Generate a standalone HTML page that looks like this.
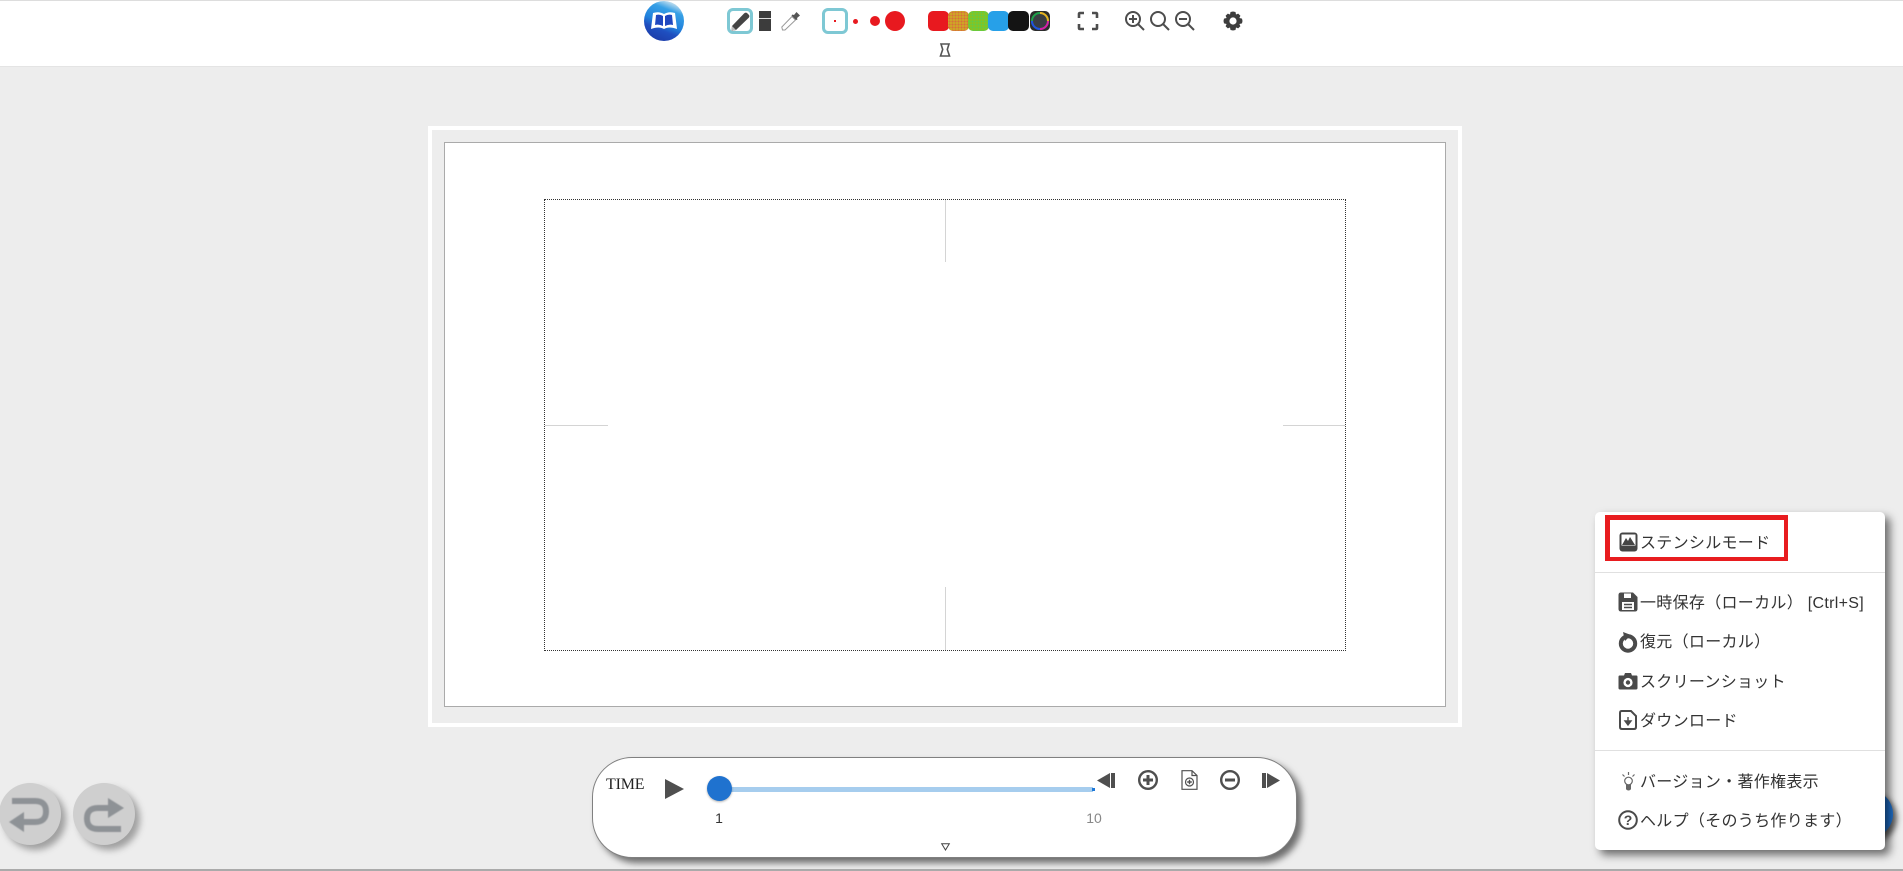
<!DOCTYPE html>
<html lang="ja">
<head>
<meta charset="utf-8">
<title>Paint</title>
<style>
html,body{margin:0;padding:0;width:1903px;height:871px;overflow:hidden;background:#ededed;font-family:"Liberation Sans","Noto Sans CJK JP",sans-serif;color:#333}
.a{position:absolute;box-sizing:border-box}
svg{position:absolute;display:block;overflow:visible}
#top{left:0;top:0;width:1903px;height:67px;background:#fff;border-top:1px solid #ddd;border-bottom:1px solid #e4e4e4}
.sw{top:11px;width:21px;height:20px;border-radius:5px}
.m{left:1640px;font-size:16px;line-height:22px;white-space:nowrap;color:#333;letter-spacing:.3px}
.hl{left:1595px;width:290px;height:1px;background:#e0e0e0}
</style>
</head>
<body>
<div class="a" id="top"></div>

<!-- logo -->
<svg style="left:644px;top:1px" width="40" height="40" viewBox="0 0 40 40">
<defs>
<linearGradient id="lg" x1="0.7" y1="0" x2="0.3" y2="1"><stop offset="0" stop-color="#d8e8f0"/><stop offset=".22" stop-color="#36a0e6"/><stop offset=".55" stop-color="#2080dc"/><stop offset=".72" stop-color="#1f4fc0"/><stop offset="1" stop-color="#1c3ca8"/></linearGradient>
</defs>
<circle cx="20" cy="20" r="20" fill="url(#lg)"/>
<path d="M7 28 L9 12 Q15 10 20 13 Q25 10 31 12 L33 28 Q25 25 20 28 Q15 25 7 28Z" fill="#fff"/>
<path d="M11 24 L12 14 Q16 13 19 15 L19 25 Q15 23 11 24Z M29 24 L28 14 Q24 13 21 15 L21 25 Q25 23 29 24Z" fill="#2048c0"/>
</svg>

<!-- pen -->
<div class="a" style="left:727px;top:8px;width:26px;height:26px;border:3px solid #7ec8d4;border-radius:6px"></div>
<svg style="left:727px;top:8px" width="26" height="26" viewBox="0 0 26 26">
<path d="M5 18 L17 5.5 Q18.5 4 20 5 L22 7 Q23 8.5 21.5 10 L9 22 L4.5 23Z" fill="#444"/><path d="M5 18 L9 22 L4.5 23Z" fill="#bbb"/>
</svg>
<!-- eraser -->
<div class="a" style="left:759px;top:11px;width:12px;height:20px;background:#3c3c3c"></div>
<div class="a" style="left:759px;top:18px;width:12px;height:1px;background:#ddd"></div>
<!-- dropper -->
<svg style="left:781px;top:11px" width="20" height="20" viewBox="0 0 20 20">
<path d="M1.5 19 L.8 16 L11 5.5 L14.5 9 L4 19Z" fill="#fff" stroke="#999" stroke-width="1"/>
<path d="M13 4 L15.5 1 L19 4.5 L16 7 L16.5 8.5 L15 9 L10.5 4.5 L11.5 3.5Z" fill="#555"/>
</svg>
<!-- sizes -->
<div class="a" style="left:822px;top:8px;width:26px;height:26px;border:3px solid #7ec8d4;border-radius:6px"></div>
<div class="a" style="left:834px;top:20px;width:2px;height:2px;background:#e8191f"></div>
<div class="a" style="left:853px;top:19px;width:5px;height:5px;border-radius:50%;background:#e8191f"></div>
<div class="a" style="left:870px;top:16px;width:10px;height:10px;border-radius:50%;background:#e8191f"></div>
<div class="a" style="left:885px;top:11px;width:20px;height:20px;border-radius:50%;background:#e8191f"></div>

<!-- colours -->
<div class="a sw" style="left:928px;background:#e8191f"></div>
<div class="a sw" style="left:948px;background:#cfa426;background-image:radial-gradient(#d8703a .8px,transparent 1px);background-size:3px 3px"></div>
<div class="a sw" style="left:968px;background:#84c424;background-image:radial-gradient(#5fcc48 .8px,transparent 1px);background-size:3px 3px"></div>
<div class="a sw" style="left:988px;background:#27a0e8"></div>
<div class="a sw" style="left:1008px;background:#141414"></div>
<svg style="left:1030px;top:11px" width="20" height="20" viewBox="0 0 20 20">
<rect width="20" height="20" rx="5" fill="#2c2c2c"/>
<circle cx="10" cy="10" r="8" fill="#3a3d42" stroke="#1ea04a" stroke-width="2"/>
<path d="M10 2 A8 8 0 0 1 18 10" fill="none" stroke="#e8b020" stroke-width="2"/>
<path d="M18 10 A8 8 0 0 1 10 18" fill="none" stroke="#d81ca8" stroke-width="2"/>
<path d="M10 18 A8 8 0 0 1 2 10" fill="none" stroke="#2050e0" stroke-width="2"/>
</svg>

<!-- fullscreen -->
<svg style="left:1078px;top:12px" width="20" height="18" viewBox="0 0 20 18" fill="none" stroke="#4d4d4d" stroke-width="2.6">
<path d="M1 6 V2 Q1 1 2 1 H6 M14 1 H18 Q19 1 19 2 V6 M19 12 V16 Q19 17 18 17 H14 M6 17 H2 Q1 17 1 16 V12"/>
</svg>
<!-- zoom icons -->
<svg style="left:1125px;top:11px" width="20" height="20" viewBox="0 0 20 20" fill="none" stroke="#4d4d4d" stroke-width="2">
<circle cx="8" cy="8" r="7"/><path d="M13 13 L19 19M4 8H12M8 4V12"/>
</svg>
<svg style="left:1150px;top:11px" width="20" height="20" viewBox="0 0 20 20" fill="none" stroke="#4d4d4d" stroke-width="2">
<circle cx="8" cy="8" r="7"/><path d="M13 13 L19 19"/>
</svg>
<svg style="left:1175px;top:11px" width="20" height="20" viewBox="0 0 20 20" fill="none" stroke="#4d4d4d" stroke-width="2">
<circle cx="8" cy="8" r="7"/><path d="M13 13 L19 19M4 8H12"/>
</svg>
<!-- gear -->
<svg style="left:1223px;top:11px" width="20" height="20" viewBox="0 0 20 20">
<path d="M10 0.5 L12.5 1 L13 3.5 L15.2 2.6 L17.4 4.8 L16.4 7 L19 7.6 L19.5 10 L19 12.4 L16.4 13 L17.4 15.2 L15.2 17.4 L13 16.5 L12.5 19 L10 19.5 L7.5 19 L7 16.5 L4.8 17.4 L2.6 15.2 L3.6 13 L1 12.4 L0.5 10 L1 7.6 L3.6 7 L2.6 4.8 L4.8 2.6 L7 3.5 L7.5 1Z" fill="#3d3d3d"/>
<circle cx="10" cy="10" r="3.6" fill="#fff"/>
</svg>
<!-- flask -->
<svg style="left:939px;top:43px" width="12" height="14" viewBox="0 0 12 14" fill="none" stroke="#555" stroke-width="1.6">
<path d="M2 1 H10 L8.3 6.5 L10.5 13 H1.5 L3.7 6.5Z"/>
</svg>

<!-- canvas -->
<div class="a" style="left:428px;top:126px;width:1034px;height:601px;border:4px solid #fff;background:#ededed"></div>
<div class="a" style="left:444px;top:142px;width:1002px;height:565px;background:#fff;border:1px solid #aaa"></div>
<div class="a" style="left:544px;top:199px;width:802px;height:452px;border:1px dotted #333"></div>
<div class="a" style="left:945px;top:200px;width:1px;height:62px;background:#d4d4d4"></div>
<div class="a" style="left:945px;top:587px;width:1px;height:63px;background:#d4d4d4"></div>
<div class="a" style="left:545px;top:425px;width:63px;height:1px;background:#d4d4d4"></div>
<div class="a" style="left:1283px;top:425px;width:62px;height:1px;background:#d4d4d4"></div>

<!-- timeline -->
<div class="a" style="left:592px;top:757px;width:705px;height:101px;background:#fff;border:1px solid #808080;border-radius:40px;box-shadow:5px 5px 7px #6e6e6e"></div>
<div class="a" style="left:606px;top:775px;font:16px/20px 'Liberation Serif',serif;letter-spacing:-.2px;color:#222">TIME</div>
<svg style="left:665px;top:779px" width="19" height="20" viewBox="0 0 19 20"><path d="M0 0 L19 10 L0 20Z" fill="#4f4f4f"/></svg>
<div class="a" style="left:719px;top:787px;width:374px;height:5px;background:#a6cdee"></div>
<div class="a" style="left:1092px;top:788px;width:3px;height:3px;background:#1e78d8"></div>
<div class="a" style="left:707px;top:776px;width:25px;height:25px;border-radius:50%;background:#1f72cf;box-shadow:0 1px 2px rgba(0,0,0,.3)"></div>
<div class="a" style="left:709px;top:810px;width:20px;text-align:center;font-size:14px;line-height:16px;color:#333">1</div>
<div class="a" style="left:1079px;top:810px;width:30px;text-align:center;font-size:14px;line-height:16px;color:#888">10</div>

<svg style="left:1097px;top:772px" width="18" height="17" viewBox="0 0 18 17"><path d="M13 1 V16 L0 8.5Z" fill="#4f4f4f"/><rect x="14" y="1" width="4" height="15" fill="#4f4f4f"/></svg>
<svg style="left:1138px;top:770px" width="20" height="20" viewBox="0 0 20 20"><circle cx="10" cy="10" r="8.8" fill="none" stroke="#4f4f4f" stroke-width="2.4"/><path d="M5 10H15M10 5V15" stroke="#4f4f4f" stroke-width="3"/></svg>
<svg style="left:1181px;top:770px" width="17" height="20" viewBox="0 0 17 20" fill="none" stroke="#4f4f4f"><path d="M1 .7 H11 L16 5.5 V19.3 H1Z M11 .7 V5.5 H16" stroke-width="1.2"/><circle cx="8.5" cy="12" r="4" stroke-width="1.2"/><path d="M6.2 12H10.8M8.5 9.7V14.3" stroke-width="1.4"/></svg>
<svg style="left:1220px;top:770px" width="20" height="20" viewBox="0 0 20 20"><circle cx="10" cy="10" r="8.8" fill="none" stroke="#4f4f4f" stroke-width="2.4"/><path d="M5 10H15" stroke="#4f4f4f" stroke-width="3"/></svg>
<svg style="left:1262px;top:772px" width="18" height="17" viewBox="0 0 18 17"><rect x="0" y="1" width="4" height="15" fill="#4f4f4f"/><path d="M5 1 V16 L18 8.5Z" fill="#4f4f4f"/></svg>
<svg style="left:941px;top:843px" width="9" height="8" viewBox="0 0 9 8"><path d="M.7 .7 H8.3 L4.5 7Z" fill="#fff" stroke="#444"/></svg>

<!-- undo / redo -->
<div class="a" style="left:-1px;top:783px;width:62px;height:62px;border-radius:50%;background:#cfcfcf;box-shadow:5px 5px 7px #a0a0a0"></div>
<svg style="left:8px;top:796px;filter:blur(.5px)" width="42" height="36" viewBox="0 0 42 36"><path d="M4 5 H27 Q38 5 38 15.5 Q38 26 27 26 H14" fill="none" stroke="#8e9296" stroke-width="6"/><path d="M1 26 L16 16 V36Z" fill="#8e9296"/></svg>
<div class="a" style="left:73px;top:783px;width:62px;height:62px;border-radius:50%;background:#cfcfcf;box-shadow:5px 5px 7px #a0a0a0"></div>
<svg style="left:84px;top:796px;filter:blur(.5px)" width="42" height="36" viewBox="0 0 42 36"><path d="M37 33 H14 Q3 33 3 22.5 Q3 12 14 12 H26" fill="none" stroke="#8e9296" stroke-width="6"/><path d="M40 12 L24 2 V22Z" fill="#8e9296"/></svg>

<!-- bottom line -->
<div class="a" style="left:0;top:869px;width:1903px;height:2px;background:#aaa"></div>

<!-- blue button behind menu -->
<div class="a" style="left:1845px;top:790px;width:48px;height:48px;border-radius:50%;background:#1f72cf;box-shadow:4px 4px 6px #666"></div>

<!-- menu -->
<div class="a" style="left:1595px;top:512px;width:290px;height:338px;background:#fff;border-radius:5px;box-shadow:5px 5px 9px rgba(0,0,0,.55)"></div>
<div class="a" style="left:1605px;top:515px;width:183px;height:46px;border:5px solid #e81c1f;border-bottom-width:4px;border-right-width:4px"></div>
<div class="a hl" style="top:572px"></div>
<div class="a hl" style="top:750px"></div>

<svg style="left:1619px;top:532px" width="19" height="20" viewBox="0 0 19 20"><rect x=".5" y=".5" width="18" height="19" rx="3" fill="#444"/><rect x="2.5" y="2.5" width="14" height="11" fill="#fff"/><path d="M3 13 L7 6 L9 9 L11 5 L16 13Z" fill="#444"/></svg>
<div class="a m" style="top:533px">ステンシルモード</div>

<svg style="left:1618px;top:592px" width="20" height="20" viewBox="0 0 20 20"><path d="M3 .5 H15 L19.5 5 V17 Q19.5 19.5 17 19.5 H3 Q.5 19.5 .5 17 V3 Q.5 .5 3 .5Z" fill="#4a4a4a"/><rect x="6" y="1.5" width="7" height="4.5" fill="#fff"/><rect x="4" y="10" width="12" height="8" fill="#fff"/><path d="M6 12.5H14M6 15.5H14" stroke="#4a4a4a" stroke-width="1.4"/></svg>
<div class="a m" style="top:593px">一時保存（ローカル） [Ctrl+S]</div>

<svg style="left:1618px;top:632px" width="20" height="21" viewBox="0 0 20 21"><circle cx="10" cy="11.5" r="7.2" fill="none" stroke="#4a4a4a" stroke-width="4"/><path d="M5 0 L13 3 L7 9Z" fill="#4a4a4a"/></svg>
<div class="a m" style="top:632px">復元（ローカル）</div>

<svg style="left:1618px;top:672px" width="20" height="18" viewBox="0 0 20 18"><path d="M1.5 3.5 H6 L7 1 H13 L14 3.5 H18.5 Q19.5 3.5 19.5 5 V16 Q19.5 17.5 18 17.5 H2 Q.5 17.5 .5 16 V5 Q.5 3.5 1.5 3.5Z" fill="#4a4a4a"/><circle cx="10" cy="10.5" r="4.6" fill="#fff"/><circle cx="10" cy="10.5" r="2.2" fill="#4a4a4a"/></svg>
<div class="a m" style="top:672px">スクリーンショット</div>

<svg style="left:1619px;top:710px" width="18" height="20" viewBox="0 0 18 20"><path d="M2.5 1 H12 L17 6 V17 Q17 19 15 19 H3 Q1 19 1 17 V3 Q1 1 2.5 1Z" fill="#fff" stroke="#4a4a4a" stroke-width="2"/><path d="M9 7 V13M6 11 L9 15 L12 11Z" stroke="#4a4a4a" stroke-width="1.4" fill="#4a4a4a"/></svg>
<div class="a m" style="top:711px">ダウンロード</div>

<svg style="left:1621px;top:771px" width="15" height="21" viewBox="0 0 15 21" fill="none" stroke="#666"><circle cx="7.5" cy="10" r="3.8" stroke-width="1.2"/><path d="M5.5 14 H9.5 V18 Q7.5 20 5.5 18Z" fill="#666" stroke-width="1"/><path d="M7.5 1 V4M1.5 3.5 L3.5 5.5M13.5 3.5 L11.5 5.5" stroke-width="1.2"/></svg>
<div class="a m" style="top:772px">バージョン・著作権表示</div>

<svg style="left:1618px;top:810px" width="20" height="20" viewBox="0 0 20 20"><circle cx="10" cy="10" r="8.8" fill="none" stroke="#4a4a4a" stroke-width="2"/><text x="10" y="15" text-anchor="middle" font-family="Liberation Sans,sans-serif" font-size="14" font-weight="bold" fill="#4a4a4a">?</text></svg>
<div class="a m" style="top:811px">ヘルプ（そのうち作ります）</div>
</body>
</html>
